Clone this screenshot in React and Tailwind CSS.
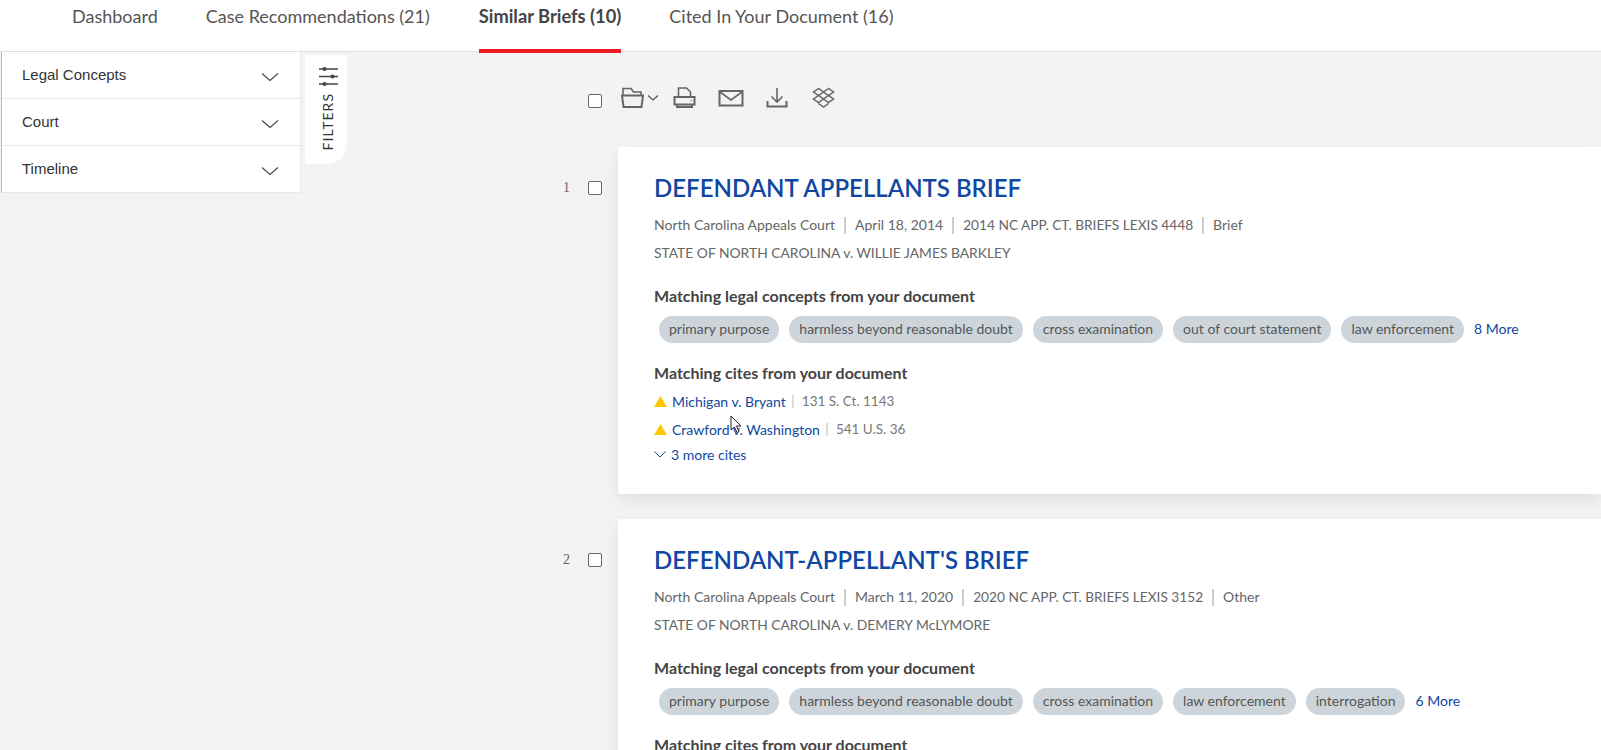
const tabs = [
    { label: "Dashboard" },
    { label: "Case Recommendations (21)" },
    { label: "Similar Briefs (10)", active: true },
    { label: "Cited In Your Document (16)" },
];

const filters = ["Legal Concepts", "Court", "Timeline"];

const briefs = [
    {
        title: "DEFENDANT APPELLANTS BRIEF",
        court: "North Carolina Appeals Court",
        date: "April 18, 2014",
        lexis: "2014 NC APP. CT. BRIEFS LEXIS 4448",
        type: "Brief",
        parties: "STATE OF NORTH CAROLINA v. WILLIE JAMES BARKLEY",
        concepts: ["primary purpose", "harmless beyond reasonable doubt", "cross examination", "out of court statement", "law enforcement"],
        more: "8 More",
        cites: [
            { name: "Michigan v. Bryant", ref: "131 S. Ct. 1143" },
            { name: "Crawford v. Washington", ref: "541 U.S. 36" },
        ],
        moreCites: "3 more cites",
    },
    {
        title: "DEFENDANT-APPELLANT'S BRIEF",
        court: "North Carolina Appeals Court",
        date: "March 11, 2020",
        lexis: "2020 NC APP. CT. BRIEFS LEXIS 3152",
        type: "Other",
        parties: "STATE OF NORTH CAROLINA v. DEMERY McLYMORE",
        concepts: ["primary purpose", "harmless beyond reasonable doubt", "cross examination", "law enforcement", "interrogation"],
        more: "6 More",
        cites: [],
    },
];

function Checkbox() {
    return <span className="block w-[14px] h-[14px] rounded-[2px] border border-[#666] bg-white" />;
}

function Divider() {
    return <span className="mx-[9px] w-[2px] h-[17px] bg-[#ccc]" />;
}

function ToolIcon({ width, children }) {
    return (
        <svg width={width} height="24" viewBox={`0 0 ${width} 24`} fill="none" stroke="#666" strokeWidth="2">
            {children}
        </svg>
    );
}

function Toolbar() {
    return (
        <div className="flex items-center h-[24px]">
            <div className="w-[14px] mt-[6px]">
                <Checkbox />
            </div>
            <div className="ml-[19px] flex items-center">
                <ToolIcon width={23}>
                    <path d="M2 9V2.5h8L12.5 6H20v3" strokeWidth="1.6" />
                    <path d="M1 9.5h21L20.5 21h-18z" />
                </ToolIcon>
                <svg className="ml-[3px]" width="12" height="8" viewBox="0 0 12 8" fill="none" stroke="#555" strokeWidth="1.3">
                    <path d="M1 1.5l5 4.5 5-4.5" />
                </svg>
            </div>
            <div className="ml-[14px]">
                <ToolIcon width={23}>
                    <path d="M5.5 10V2h8l4 4v4" strokeWidth="1.6" />
                    <path d="M1.5 11h20v7.5h-20z" />
                    <path d="M4 19v2h15v-2" />
                    <circle cx="18" cy="14.5" r="1" fill="#aaa" stroke="none" />
                </ToolIcon>
            </div>
            <div className="ml-[22px]">
                <ToolIcon width={26}>
                    <path d="M1.5 5h23v14.5h-23z" />
                    <path d="M2 6l11 8 11-8" strokeWidth="1.6" />
                </ToolIcon>
            </div>
            <div className="ml-[22px]">
                <ToolIcon width={22}>
                    <path d="M11 2v14M5.5 10.5L11 16l5.5-5.5" strokeWidth="1.6" />
                    <path d="M1.5 15v5.5h19V15" />
                </ToolIcon>
            </div>
            <div className="ml-[24px]">
                <ToolIcon width={23}>
                    <path d="M6.5 2.5L1.5 6l5 3.5L11.5 6zM16.5 2.5L11.5 6l5 3.5 5-3.5zM6.5 9.5l-5 3.5 5 3.5 5-3.5zM16.5 9.5l-5 3.5 5 3.5 5-3.5z" strokeWidth="1.5" />
                    <path d="M6.5 17.5l5 3.5 5-3.5" strokeWidth="1.5" />
                </ToolIcon>
            </div>
        </div>
    );
}

function BriefCard({ brief }) {
    return (
        <div className="flex-1 bg-white pl-[36px] pt-[25px] h-[347px] shadow-[0_6px_16px_rgba(0,0,0,0.08)] rounded-l-[2px]">
            <h2 className="text-[24px] leading-[32px] font-semibold text-[#0f47a1]">{brief.title}</h2>
            <div className="mt-[11px] flex items-center text-[14px] leading-[20px] text-[#666]">
                {brief.court}
                <Divider />
                {brief.date}
                <Divider />
                <span className="text-[13.7px]">{brief.lexis}</span>
                <Divider />
                {brief.type}
            </div>
            <p className="mt-[8px] text-[13.85px] leading-[20px] text-[#666]">{brief.parties}</p>
            <h3 className="mt-[23px] text-[16px] leading-[20px] font-bold text-[#444]">Matching legal concepts from your document</h3>
            <div className="mt-[10px] ml-[5px] flex items-center gap-[10px] text-[14px] leading-[25px] text-[#555]">
                {brief.concepts.map((concept) => (
                    <span key={concept} className="h-[27px] px-[10px] rounded-full bg-[#cdd5db]">
                        {concept}
                    </span>
                ))}
                <a className="h-[27px] text-[#0f47a1]">{brief.more}</a>
            </div>
            <h3 className="mt-[20px] text-[16px] leading-[20px] font-bold text-[#444]">Matching cites from your document</h3>
            <div className="mt-[4px] text-[13.5px] text-[#777]">
                {brief.cites.map((cite) => (
                    <div key={cite.name} className="flex items-center h-[28px]">
                        <svg width="13" height="11" viewBox="0 0 13 11" fill="#fdc800">
                            <path d="M6.5 0L13 11H0z" />
                        </svg>
                        <a className="ml-[5px] text-[14px] text-[#0f47a1]">{cite.name}</a>
                        <span className="ml-[6px] mr-[8px] w-[2px] h-[13px] bg-[#ddd]" />
                        <span>{cite.ref}</span>
                    </div>
                ))}
            </div>
            {brief.moreCites && (
                <div className="mt-px flex items-center h-[20px] text-[14px] text-[#0f47a1]">
                    <svg className="mr-[5px]" width="12" height="7" viewBox="0 0 12 7" fill="none" stroke="#0f47a1" strokeWidth="1">
                        <path d="M0.5 0.5L6 6l5.5-5.5" />
                    </svg>
                    {brief.moreCites}
                </div>
            )}
        </div>
    );
}

export default function App() {
    return (
        <div className="relative h-[750px] w-full overflow-hidden bg-[#f3f3f3] font-['Lato','Open_Sans',sans-serif]">
            {/* Tabs */}
            <div className="h-[52px] bg-white border-b border-[#ddd] pl-[72px] flex gap-[48px] text-[18px] text-[#555]">
                {tabs.map((tab) => (
                    <div
                        key={tab.label}
                        className={
                            tab.active
                                ? "h-[53px] pt-[3px] ml-px leading-[26px] text-[18.3px] font-bold text-[#444] border-b-[4px] border-[#ed1c24]"
                                : "h-[52px] pt-[3px] leading-[26px]"
                        }
                    >
                        {tab.label}
                    </div>
                ))}
            </div>

            <div className="flex">
                {/* Filter sidebar */}
                <aside className="w-[300px] h-[141px] bg-white ml-px border-l border-r border-b border-[#e8e8e8] border-l-[#bbb] font-['Liberation_Sans',sans-serif] text-[15px] text-[#333]">
                    {filters.map((name, index) => (
                        <div
                            key={name}
                            className={
                                index < 2
                                    ? "h-[47px] flex items-center justify-between pl-[20px] pr-[21px] border-b border-[#e8e8e8]"
                                    : "h-[46px] flex items-center justify-between pl-[20px] pr-[21px]"
                            }
                        >
                            {name}
                            <svg className="mt-[3px]" width="18" height="10" viewBox="0 0 18 10" fill="none" stroke="#444" strokeWidth="1.1">
                                <path d="M1 1.5l8 7 8-7" />
                            </svg>
                        </div>
                    ))}
                </aside>

                {/* Filters tab */}
                <div className="ml-[4px] mt-[3px] w-[42px] h-[109px] bg-white rounded-br-[20px] flex flex-col items-center pl-[4px] pt-[11px]">
                    <svg width="19" height="20" viewBox="0 0 19 20" fill="none" stroke="#444" strokeWidth="1.6">
                        <path d="M0 3h19M0 10.5h19M0 18h19" />
                        <circle cx="5.5" cy="3" r="2" fill="#444" stroke="none" />
                        <circle cx="13.5" cy="10.5" r="2" fill="#444" stroke="none" />
                        <circle cx="5.5" cy="18" r="2" fill="#444" stroke="none" />
                    </svg>
                    <span className="mt-[7px] text-[14px] leading-none tracking-[1px] text-[#333] [writing-mode:vertical-rl] rotate-180">FILTERS</span>
                </div>

                {/* Results */}
                <main className="flex-1 min-w-0 pt-[34px]">
                    <div className="ml-[241px]">
                        <Toolbar />
                    </div>
                    <div className="mt-[37px] flex flex-col gap-[25px]">
                        {briefs.map((brief, index) => (
                            <div key={brief.title} className="flex">
                                <span className="ml-[216px] w-[25px] mt-[33px] font-['Liberation_Serif',serif] text-[14px] leading-[15px] text-[#666]">
                                    {index + 1}
                                </span>
                                <div className="mt-[34px] w-[30px]">
                                    <Checkbox />
                                </div>
                                <BriefCard brief={brief} />
                            </div>
                        ))}
                    </div>
                </main>
            </div>

            {/* Mouse pointer */}
            <svg className="absolute left-[730px] top-[415px]" width="13" height="19" viewBox="0 0 13 19" fill="white" stroke="#222" strokeWidth="1">
                <path d="M1 1v14l3.5-3 2.5 5.5 2-1-2.5-5.5H11z" />
            </svg>
        </div>
    );
}
